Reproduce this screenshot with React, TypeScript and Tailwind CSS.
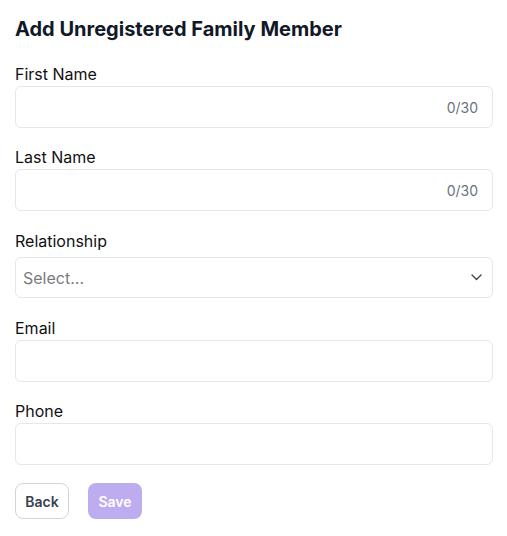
import React from "react";

function TextField({ label, counter, top }: { label: string; counter?: boolean; top: string }) {
  return (
    <div className={top}>
      <div className="text-[16px] leading-6 text-[#111111]">{label}</div>
      <div className="relative h-[42px] rounded-md border border-[#e5e7eb] bg-white">
        <input className="h-full w-full rounded-md bg-transparent px-2 text-[16px] outline-none" />
        {counter && (
          <span className="absolute right-[14px] top-1/2 -translate-y-1/2 text-[14px] text-[#6b7280]">0/30</span>
        )}
      </div>
    </div>
  );
}

export default function App() {
  return (
    <div
      className="w-[507px] h-[536px] bg-white pl-[15px] pr-[14px] pt-[15px]"
      style={{ fontFamily: "Inter, 'Noto Sans', sans-serif" }}
    >
      <h1 className="text-[20px] leading-7 font-bold text-[#111827]">Add Unregistered Family Member</h1>
      <TextField label="First Name" counter top="mt-[19px]" />
      <TextField label="Last Name" counter top="mt-[17px]" />
      <div className="mt-[18px]">
        <div className="text-[16px] leading-6 text-[#111111] mb-1">Relationship</div>
        <div className="flex h-[41px] items-center justify-between rounded-md border border-[#e5e7eb] bg-white pl-[7px] pr-[10px]">
          <span className="text-[16px] text-[#7b7b7b]">Select...</span>
          <svg width="11" height="7" viewBox="0 0 11 7" fill="none">
            <path d="M1 1l4.5 4.5L10 1" stroke="#444" strokeWidth="1.4" strokeLinecap="round" strokeLinejoin="round" />
          </svg>
        </div>
      </div>
      <TextField label="Email" top="mt-[18px]" />
      <TextField label="Phone" top="mt-[17px]" />
      <div className="mt-[18px] flex gap-[19px]">
        <button className="h-[36px] w-[54px] rounded-lg border border-[#d1d5db] bg-white text-[14px] font-semibold text-[#374151]">
          Back
        </button>
        <button className="h-[36px] w-[54px] rounded-lg bg-[#bdacef] text-[14px] font-semibold text-white">
          Save
        </button>
      </div>
    </div>
  );
}
